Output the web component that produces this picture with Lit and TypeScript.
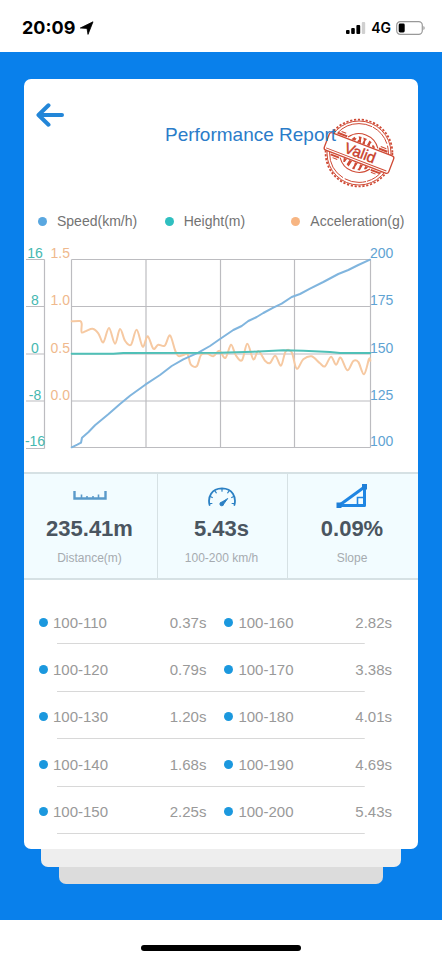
import { LitElement, html, svg, css } from "lit";
import { customElement } from "lit/decorators.js";

type Point = [number, number];

// Curve samples, three units per pixel of the plot.
const SPEED: Point[] = [
  [155, 622], [172, 614], [183, 608], [186, 593], [205, 577], [225, 556], [265, 523], [300, 492],
  [330, 467], [376, 434], [420, 405], [455, 378], [490, 358], [535, 338], [570, 318], [600, 297],
  [640, 270], [665, 258], [685, 243], [710, 231], [730, 219], [760, 203], [785, 191], [815, 171],
  [840, 162], [870, 146], [910, 126], [955, 102], [985, 90], [1015, 75], [1050, 59],
];

const HEIGHT: Point[] = [
  [155, 341], [280, 341], [310, 339], [600, 338], [700, 335], [790, 331], [850, 332], [930, 336],
  [960, 339], [1051, 339],
];

const ACCELERATION: Point[] = [
  [155, 244], [180, 243], [185, 252], [185, 277], [200, 272], [218, 266], [235, 280], [250, 307],
  [267, 264], [285, 311], [300, 267], [315, 302], [333, 314], [350, 269], [368, 320], [383, 289],
  [400, 326], [415, 314], [434, 317], [450, 286], [465, 330], [475, 348], [490, 345], [503, 343],
  [512, 373], [530, 379], [543, 345], [560, 340], [580, 349], [598, 332], [616, 354], [633, 314],
  [647, 345], [666, 361], [682, 311], [700, 358], [715, 333], [735, 362], [750, 369], [766, 347],
  [783, 377], [797, 334], [815, 337], [830, 386], [850, 358], [875, 349], [900, 370], [915, 379],
  [933, 350], [948, 374], [962, 353], [982, 391], [1000, 363], [1015, 366], [1032, 403],
  [1047, 357], [1051, 362],
];

const LEGEND = [
  { name: "Speed(km/h)", tone: "speed" },
  { name: "Height(m)", tone: "height" },
  { name: "Acceleration(g)", tone: "accel" },
];

const SPLITS = [
  ["100-110", "0.37s", "100-160", "2.82s"],
  ["100-120", "0.79s", "100-170", "3.38s"],
  ["100-130", "1.20s", "100-180", "4.01s"],
  ["100-140", "1.68s", "100-190", "4.69s"],
  ["100-150", "2.25s", "100-200", "5.43s"],
];

const COLUMNS = [47.5, 122, 196.5, 270.5, 346.5];
const ROWS = [19.5, 66.5, 114, 161, 207.5];

const toPlot = ([x, y]: Point): Point => [x / 3 - 4, y / 3];
const fixed = (n: number) => n.toFixed(1);

/** Straight segments through the samples. */
function polyline(samples: Point[]): string {
  return "M" + samples.map((s) => toPlot(s).map(fixed).join(" ")).join("L");
}

/** Catmull-Rom spline through the samples. */
function spline(samples: Point[]): string {
  const p = samples.map(toPlot);
  const f = fixed;
  let d = `M${f(p[0][0])} ${f(p[0][1])}`;
  for (let i = 0; i < p.length - 1; i++) {
    const a = p[Math.max(i - 1, 0)];
    const b = p[i];
    const c = p[i + 1];
    const e = p[Math.min(i + 2, p.length - 1)];
    d += `C${f(b[0] + (c[0] - a[0]) / 6)} ${f(b[1] + (c[1] - a[1]) / 6)} ${f(c[0] - (e[0] - b[0]) / 6)} ${f(c[1] - (e[1] - b[1]) / 6)} ${f(c[0])} ${f(c[1])}`;
  }
  return d;
}

@customElement("status-bar")
export class StatusBar extends LitElement {
  static styles = css`
    :host { display: flex; align-items: center; justify-content: space-between; height: 52px; padding: 0 17px 0 22px; box-sizing: border-box; background: #fff; color: #000; font-family: Inter, "Liberation Sans", sans-serif; }
    .group { display: flex; align-items: center; gap: 5px; padding-top: 3px; }
    .time { font-size: 18px; font-weight: 700; line-height: 22px; }
    .net { font-size: 14px; font-weight: 600; line-height: 18px; }
    .glyph { display: block; }
  `;
  render() {
    return html`
      <div class="group">
        <span class="time">20:09</span>
        <svg class="glyph" width="14" height="14" viewBox="0 0 14 14"><path d="M13 .8 8 13.400 7 7.400.300 7z" stroke="#000" stroke-width=".8" stroke-linejoin="round" /></svg>
      </div>
      <div class="group">
        <svg class="glyph" width="20" height="14" viewBox="0 0 20 14">
          <rect x="0" y="9" width="3.6" height="4" rx="1" /><rect x="5.2" y="7" width="3.6" height="6" rx="1" />
          <rect x="10.4" y="4" width="3.8" height="9" rx="1" /><rect x="15.8" y="1" width="3.4" height="12" rx="1" fill="#d0d0d0" />
        </svg>
        <span class="net">4G</span>
        <svg class="glyph" width="29" height="14" viewBox="0 0 29 14">
          <rect x=".7" y=".7" width="25.6" height="12.6" rx="3.6" fill="none" stroke="#999" stroke-width="1.2" />
          <rect x="2.700" y="2.500" width="6" height="9" rx="1.4" /><path d="M27.4 5v4q1.3-.6 1.3-2t-1.3-2" fill="#999" />
        </svg>
      </div>
    `;
  }
}

@customElement("run-chart")
export class RunChart extends LitElement {
  static styles = css`
    :host { display: block; }
    .chart { display: block; width: 100%; font-family: "Liberation Sans", Arial, sans-serif; font-size: 14px; }
    .grid { stroke: #bcbcc0; stroke-width: 1.2; fill: none; }
    .line { fill: none; stroke-linejoin: round; stroke-linecap: round; }
    .speed { stroke: #80b5de; stroke-width: 2; }
    .height { stroke: #4fc0b7; stroke-width: 2; }
    .accel { stroke: #f6c9a2; stroke-width: 2; }
    .t-height { fill: #45b8b0; }
    .t-accel { fill: #efb98d; }
    .t-speed { fill: #5fa3d3; }
  `;
  render() {
    const baseline = (i: number) => ROWS[i] - 1.5;
    return html`
      <svg class="chart" viewBox="0 0 394 216" role="img" aria-label="Speed, height and acceleration">
        <g class="grid">
          ${COLUMNS.map((x) => svg`<path d="M${x} 19.5V207.5" />`)}
          ${ROWS.map((y) => svg`<path d="M47.5 ${y}H346.5" />`)}
          <path d="M20.5 19.5V208.5M2 19.5H20.5M2 66.5H20.5M2 114H20.5M2 161H20.5M2 208.5H20.5" />
        </g>
        <path class="line accel" d=${spline(ACCELERATION)} />
        <path class="line speed" d=${polyline(SPEED)} />
        <path class="line height" d=${polyline(HEIGHT)} />
        ${["16", "8", "0", "-8", "-16"].map(
          (t, i) => svg`<text class="t-height" text-anchor="middle" x="11" y=${baseline(i)}>${t}</text>`,
        )}
        ${["1.5", "1.0", "0.5", "0.0"].map(
          (t, i) => svg`<text class="t-accel" text-anchor="end" x="46" y=${baseline(i)}>${t}</text>`,
        )}
        ${["200", "175", "150", "125", "100"].map(
          (t, i) => svg`<text class="t-speed" x="346" y=${baseline(i)}>${t}</text>`,
        )}
      </svg>
    `;
  }
}

@customElement("valid-stamp")
export class ValidStamp extends LitElement {
  static styles = css`
    :host { display: block; width: 76px; height: 76px; }
    .stamp { display: block; overflow: visible; }
    .ink { fill: none; stroke: #cf4a35; }
    .solid { fill: #cf4a35; }
    .banner { fill: #fff; stroke: #cf4a35; stroke-width: 1.3; }
    .word { fill: #c9402c; font-family: "Liberation Sans", Arial, sans-serif; font-size: 15px; stroke: #c9402c; stroke-width: 0.4; }
  `;
  render() {
    return html`
      <svg class="stamp" width="76" height="76" viewBox="-38 -38 76 76" role="img" aria-label="Valid">
        <circle class="ink" r="33.4" stroke-width="1.8" stroke-dasharray="2.2 1.7" />
        <circle class="ink" r="32" stroke-width="1" />
        <circle class="ink" r="29.4" stroke-width="1" stroke-dasharray="38 1 22 2 50 1" />
        <g transform="rotate(21)">
          <path class="ink" stroke-width="1.1" d="M-16 -11A19.5 19.5 0 0 1 16 -11M-16 11A19.5 19.5 0 0 0 16 11" />
          <path class="ink" stroke-width="2" d="M-27 -11.300h10M17 -11.300h9M-26 11.500h9M17 11.500h10" />
          <path class="ink" stroke-width="1" d="M-24 -13.800h5M18 -13.800h6M-23 13.800h5M18 13.800h5" />
          <path class="solid" d="M-12-10l2-3.500 1.500 1 1-.5-.500 3zM-6-10l1.200-3-1.500-2.500 3-.5.500 3 1 3zM-.5-10l.5-3.500-1.500-2.500h4l-1 2.500.8 3.500zM4.500-10l.5-3 .2-2.500 2.800 1-.8 2 .3 2.500zM10-10l-.2-2.500 2 .5 1.500 2z" />
          <path class="solid" d="M-12.500 10h3.500l-1 3.500-1.500.5zM-6.500 10h3l-1 4.500-.5 2-2.500-1.500zM-.5 10h3l-1 3.500 0 3.500h-2.500l.8-3.500zM5 10h3l-.5 3-.5 3-2.500.5.8-3zM10.500 10h3l-1 2.500-2 1z" />
          <rect class="banner" x="-34.5" y="-9.3" width="69" height="18.6" rx="2.5" />
          <path class="ink" stroke-width="1" d="M-32.5 7H32" />
          <text class="word" text-anchor="middle" x="1" y="4.6">Valid</text>
        </g>
      </svg>
    `;
  }
}

@customElement("app-root")
export class AppRoot extends LitElement {
  static styles = css`
    :host { display: flex; flex-direction: column; min-height: 100vh; background: #fff; font-family: "Liberation Sans", Arial, sans-serif; }
    * { box-sizing: border-box; }
    .page { flex: 1; background: #0980eb; padding: 27px 24px 36px; }
    .card { background: #fff; border-radius: 7px; }
    .sheet { height: 18px; border-radius: 0 0 7px 7px; }
    .sheet-a { margin: 0 17px; background: #eee; }
    .sheet-b { margin: 0 35px; height: 17px; background: #dcdcdc; }
    .head { display: flex; align-items: flex-start; padding: 24px 12px 0; height: 128px; gap: 101px; }
    .back { width: 28px; height: 24px; padding: 0; border: 0; background: none; cursor: pointer; }
    .back svg, .icon { display: block; }
    .title-wrap { position: relative; padding-top: 20px; }
    .title { position: relative; z-index: 1; margin: 0; font-size: 19px; line-height: 24px; font-weight: 400; color: #2b7cc9; white-space: nowrap; }
    .stamp { position: absolute; left: calc(100% - 15px); top: 12px; }
    .legend { display: grid; grid-template-columns: repeat(3, 1fr); margin: 0; padding: 4px 0 9px 14px; list-style: none; font-size: 14px; line-height: 20px; color: #737373; }
    .legend li { display: flex; align-items: center; gap: 10px; white-space: nowrap; }
    .key { width: 9px; height: 9px; border-radius: 50%; }
    .speed { background: #59a7e0; }
    .height { background: #2fbfc0; }
    .accel { background: #f7b582; }
    .stats { display: grid; grid-template-columns: 133fr 130fr 131fr; margin-top: 16px; height: 108px; background: #f2fcff; border-top: 2px solid #d6e1e4; border-bottom: 2px solid #d6e1e4; }
    .stat { display: flex; flex-direction: column; align-items: center; padding: 10px 2px 0 0; }
    .stat + .stat { border-left: 1px solid #d6e1e4; }
    .value { margin-top: 8px; font-size: 22px; line-height: 26px; font-weight: 700; color: #4a5560; }
    .label { margin-top: 8px; font-size: 12px; line-height: 16px; color: #a6abb0; }
    .splits { padding: 17px 26px 15px 15px; }
    .table { width: 100%; height: 237px; table-layout: fixed; border-collapse: collapse; font-size: 15px; color: #999; }
    .table tr { background: linear-gradient(#d8d8d8, #d8d8d8) no-repeat 18px 100% / calc(100% - 45px) 1px; }
    .table th, .table td { padding: 3px 0 0; font-weight: 400; width: 24%; }
    .table td { text-align: right; }
    .table td.first { padding-right: 2px; }
    .table th.second { width: 28%; padding-left: 16px; }
    .range { display: flex; align-items: center; gap: 5px; white-space: nowrap; }
    .dot { width: 9px; height: 9px; border-radius: 50%; background: #1b98de; }
    .foot { display: flex; justify-content: center; align-items: flex-end; height: 40px; padding-bottom: 9px; }
    .home { width: 36%; height: 6px; border-radius: 3px; background: #000; }
  `;

  render() {
    return html`
      <status-bar></status-bar>
      <main class="page">
        <section class="card">
          <header class="head">
            <button class="back" aria-label="Back">
              <svg width="28" height="24" viewBox="0 0 28 24" fill="none" stroke="#2386d8" stroke-width="4" stroke-linecap="round" stroke-linejoin="round"><path d="M12.5 2.3 2.5 12l10 9.7M3 12h23" /></svg>
            </button>
            <div class="title-wrap">
              <h1 class="title">Performance Report</h1>
              <valid-stamp class="stamp"></valid-stamp>
            </div>
          </header>
          <ul class="legend">
            ${LEGEND.map((l) => html`<li><span class="key ${l.tone}"></span>${l.name}</li>`)}
          </ul>
          <run-chart></run-chart>
          <div class="stats">
            <div class="stat">
              <svg class="icon" width="34" height="24" viewBox="0 0 34 24" fill="none" stroke="#5a9aca"><path stroke-width="2.4" d="M1.5 7v7.500h31V7" /><path stroke-width="1.600" d="M8.500 10.500V14M14 12V14M20 12V14M25.500 10.500V14" /></svg>
              <span class="value">235.41m</span><span class="label">Distance(m)</span>
            </div>
            <div class="stat">
              <svg class="icon" width="30" height="24" viewBox="0 0 30 24" fill="none" stroke="#2b80c4" stroke-linecap="round">
                <path stroke-width="1.800" d="M2.600 21C.5 13 4.500 4.500 15 4.300c10.500.2 14.500 8.700 12.400 16.700" />
                <path stroke-width="1.200" d="M2.500 19.500h2.400M3.300 12.500l2 1M8 7l1.300 1.800M15 5v2.200M22 7l-1.300 1.800M26.700 12.500l-2 1M27.500 19.500h-2.400" />
                <path stroke-width="1" fill="#2b80c4" stroke-linejoin="round" d="M20.500 14.800l-3.800 5.200a1.900 1.900 0 1 1-2-2z" />
              </svg>
              <span class="value">5.43s</span><span class="label">100-200 km/h</span>
            </div>
            <div class="stat">
              <svg class="icon" width="32" height="24" viewBox="0 0 32 24" fill="none" stroke="#1f86e3">
                <path stroke-width="3" stroke-linejoin="round" d="M3 21.500H28.500V3z" /><path stroke-width="1.600" d="M21.500 21v-7.500h7" />
                <path fill="#1f7fd8" stroke="none" d="M.5 18.500h5V24h-5zM26 0h5v5.500h-5z" />
              </svg>
              <span class="value">0.09%</span><span class="label">Slope</span>
            </div>
          </div>
          <div class="splits">
            <table class="table" aria-label="Split times">
              <tbody>
                ${SPLITS.map(
                  ([r1, v1, r2, v2]) => html`<tr>
                    <th scope="row"><span class="range"><span class="dot"></span>${r1}</span></th>
                    <td class="first">${v1}</td>
                    <th scope="row" class="second"><span class="range"><span class="dot"></span>${r2}</span></th>
                    <td>${v2}</td>
                  </tr>`,
                )}
              </tbody>
            </table>
          </div>
        </section>
        <div class="sheet sheet-a"></div>
        <div class="sheet sheet-b"></div>
      </main>
      <footer class="foot"><div class="home"></div></footer>
    `;
  }
}
